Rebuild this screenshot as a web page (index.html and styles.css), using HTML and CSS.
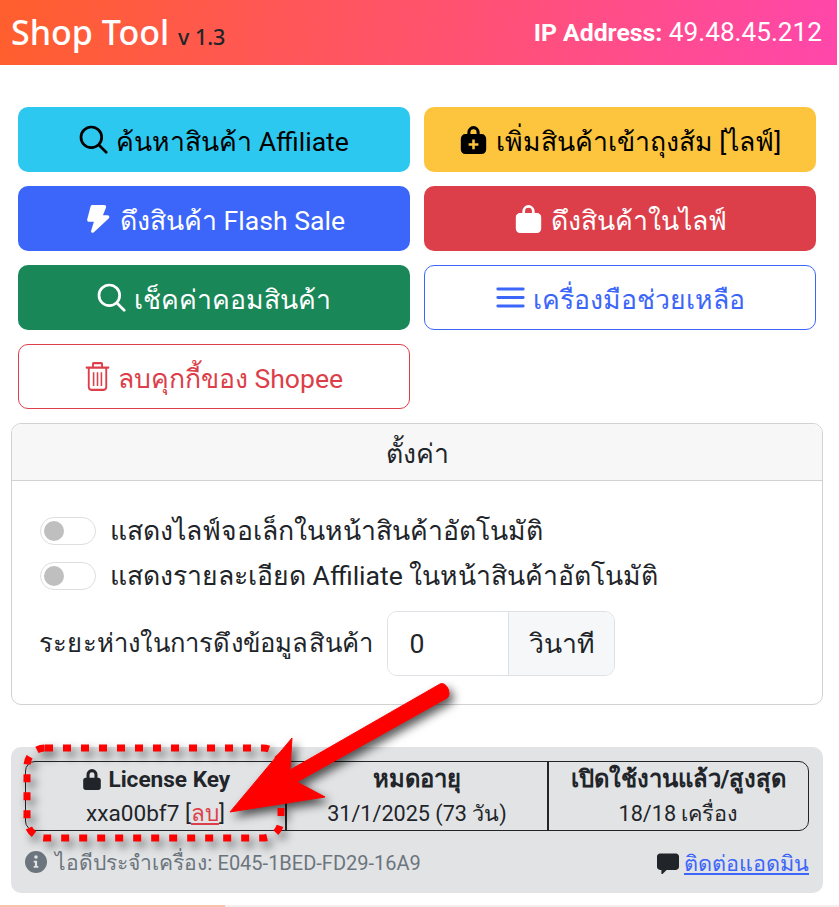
FILE: index.html
```html
<!DOCTYPE html>
<html lang="en">
<head>
    <meta charset="UTF-8">
    <meta name="viewport" content="width=device-width, initial-scale=1.0">
    <title>Shop Tool</title>
    <link rel="stylesheet" href="styles.css">
</head>
<body>
    <header class="topbar">
        <h1 class="brand">Shop Tool <small>v 1.3</small></h1>
        <div class="ip"><strong>IP Address:</strong> 49.48.45.212</div>
    </header>

    <main class="page">
        <!-- Action buttons -->
        <div class="actions">
            <a class="btn btn-info">
                <svg class="icon icon-line" viewBox="0 0 16 16"><circle cx="6.800" cy="6.800" r="5.700"/><path d="M11 11l4 4"/></svg>
                <span>ค้นหาสินค้า Affiliate</span>
            </a>
            <a class="btn btn-warning">
                <svg class="icon" viewBox="0 0 16 16"><path d="M4.600 5V4a3.400 3.400 0 0 1 6.800 0v1h1.100A2.500 2.500 0 0 1 15 7.500v6a2.500 2.500 0 0 1-2.500 2.500h-9A2.500 2.500 0 0 1 1 13.500v-6A2.500 2.500 0 0 1 3.500 5zm1.700 0h3.400V4a1.700 1.700 0 0 0-3.400 0zM7.300 8v2H5.300v1.400h2v2h1.400v-2h2V10h-2V8z"/></svg>
                <span>เพิ่มสินค้าเข้าถุงส้ม [ไลฟ์]</span>
            </a>
            <a class="btn btn-primary">
                <svg class="icon" viewBox="0 0 16 16"><path d="M5.200.6h6.600c.7 0 1.100.7.900 1.300L11 6.200h2.600c.8 0 1.200 1 .7 1.600L6 15.600c-.7.700-1.800 0-1.500-.9L6 9.800H3.300c-.7 0-1.100-.6-1-1.200L4.200 1.400C4.300.9 4.700.6 5.200.6z"/></svg>
                <span>ดึงสินค้า Flash Sale</span>
            </a>
            <a class="btn btn-danger">
                <svg class="icon" viewBox="0 0 16 16"><path d="M4.600 5V4a3.400 3.400 0 0 1 6.800 0v1h1.300A2.300 2.300 0 0 1 15 7.300v6.400a2.300 2.300 0 0 1-2.300 2.300H3.300A2.300 2.300 0 0 1 1 13.700V7.300A2.300 2.300 0 0 1 3.300 5zm1.500 0h3.800V4a1.900 1.900 0 0 0-3.800 0z"/></svg>
                <span>ดึงสินค้าในไลฟ์</span>
            </a>
            <a class="btn btn-success">
                <svg class="icon icon-line" viewBox="0 0 16 16"><circle cx="6.800" cy="6.800" r="5.700"/><path d="M11 11l4 4"/></svg>
                <span>เช็คค่าคอมสินค้า</span>
            </a>
            <a class="btn btn-outline-primary">
                <svg class="icon" viewBox="0 0 16 16"><path d="M1 2.500h14a.8.8 0 0 1 0 1.600H1a.8.8 0 0 1 0-1.600zm0 4.700h14a.8.8 0 0 1 0 1.600H1a.8.8 0 0 1 0-1.600zm0 4.700h14a.8.8 0 0 1 0 1.600H1a.8.8 0 0 1 0-1.600z"/></svg>
                <span>เครื่องมือช่วยเหลือ</span>
            </a>
            <a class="btn btn-outline-danger">
                <svg class="icon icon-trash" viewBox="0 0 16 16" preserveAspectRatio="none"><path d="M5.500 0h5c.6 0 1 .4 1 1v1.500H15a.6.6 0 0 1 0 1.200h-.8v10c0 1.300-.9 2.300-2.200 2.300H4c-1.300 0-2.200-1-2.200-2.300v-10H1a.6.6 0 0 1 0-1.200h3.500V1c0-.6.4-1 1-1zm.2 1.200v1.300h4.600V1.200zM3 3.700v10c0 .7.4 1.100 1 1.100h8c.6 0 1-.4 1-1.100v-10zm2 2h1v7.500H5zm2.500 0h1v7.500h-1zm2.500 0h1v7.500h-1z"/></svg>
                <span>ลบคุกกี้ของ Shopee</span>
            </a>
        </div>

        <!-- Settings -->
        <section class="card">
            <div class="card-header">ตั้งค่า</div>
            <div class="card-body">
                <label class="switch"><span class="switch-track"></span> แสดงไลฟ์จอเล็กในหน้าสินค้าอัตโนมัติ</label>
                <label class="switch"><span class="switch-track"></span> แสดงรายละเอียด Affiliate ในหน้าสินค้าอัตโนมัติ</label>
                <div class="delay-row">
                    <span class="delay-label">ระยะห่างในการดึงข้อมูลสินค้า</span>
                    <div class="input-group">
                        <input class="input-field" type="text" value="0">
                        <span class="input-addon">วินาที</span>
                    </div>
                </div>
            </div>
        </section>

        <!-- License -->
        <section class="license">
            <table class="license-table">
                <tr>
                    <th class="col-key">
                        <svg class="icon-sm" viewBox="0 0 16 16"><path d="M4 7V4.800a4 4 0 0 1 8 0V7h.6c1 0 1.800.8 1.800 1.800v5.400c0 1-.8 1.800-1.800 1.800H3.400c-1 0-1.800-.8-1.800-1.800V8.800C1.600 7.800 2.400 7 3.400 7zm2.200 0h3.600V4.800a1.800 1.800 0 0 0-3.600 0z"/></svg>
                        License Key
                    </th>
                    <th class="col-expire">หมดอายุ</th>
                    <th>เปิดใช้งานแล้ว/สูงสุด</th>
                </tr>
                <tr>
                    <td class="key-value">xxa00bf7 [<a class="link-danger">ลบ</a>]</td>
                    <td>31/1/2025 (73 วัน)</td>
                    <td>18/18 เครื่อง</td>
                </tr>
            </table>
            <div class="license-foot">
                <span class="machine-id">
                    <svg class="icon-sm icon-info" viewBox="0 0 16 16"><path d="M8 0a8 8 0 1 1 0 16A8 8 0 0 1 8 0zm0 3a1.300 1.300 0 1 0 0 2.600A1.300 1.300 0 0 0 8 3zM6.300 7v1.300h.9v2.600h-.9v1.300h3.400v-1.300h-.9V7z"/></svg>
                    ไอดีประจำเครื่อง: <span class="machine-code">E045-1BED-FD29-16A9</span>
                </span>
                <span class="contact">
                    <svg class="icon-sm" viewBox="0 0 16 16"><path d="M2.200 1h11.600C15 1 16 2 16 3.200v7.600c0 1.200-1 2.200-2.200 2.200H7l-3 3c-.3.3-.8.1-.8-.3V13h-1C1 13 0 12 0 10.800V3.200C0 2 1 1 2.200 1z"/></svg>
                    <a class="link-primary">ติดต่อแอดมิน</a>
                </span>
            </div>
        </section>
    </main>
    <div class="bottom-line"></div>

    <!-- Annotation drawn over the screenshot -->
    <svg class="annotation" width="839" height="907" viewBox="0 0 839 907">
        <g class="annotation-ink">
            <rect x="27" y="748" width="254" height="90" rx="18" fill="none" stroke="#ff0000" stroke-width="7" stroke-dasharray="8 10"/>
            <path d="M230 812 L292 738 L290 770 L440 684 C447 681 452 695 447 698 L297 782 L325 797 Z" fill="#ff0000" stroke="#ff0000" stroke-width="1" stroke-linejoin="round"/>
        </g>
    </svg>
</body>
</html>
```

FILE: styles.css
```css
* {
    box-sizing: border-box;
}

body {
    margin: 0;
    font-family: Roboto, "Noto Sans", sans-serif;
    font-size: 26.6px;
    line-height: 1.5;
    color: #212529;
    background-color: #fff;
    overflow: hidden;
    position: relative;
    height: 907px;
}

.topbar {
    display: flex;
    justify-content: space-between;
    align-items: center;
    height: 65px;
    width: 837px;
    padding: 0 15px 0 11px;
    background: linear-gradient(100deg, #ff5f2d, #ff47ab);
    color: white;
}

.brand {
    margin: 0;
    font-family: "Noto Sans", sans-serif;
    font-size: 34px;
    font-weight: 500;
    line-height: 1.2;
}

.brand small {
    font-size: 21.5px;
    color: #212529;
}

.ip {
    font-size: 26.2px;
}

.ip strong {
    font-size: 24.8px;
    font-weight: 700;
}

.page {
    padding: 42px 16px 0 11px;
}

.actions {
    display: grid;
    grid-template-columns: 392px 392px;
    gap: 14px;
    padding: 0 7px;
}

.btn {
    display: flex;
    justify-content: center;
    align-items: center;
    gap: 8px;
    height: 65px;
    border: 1px solid transparent;
    border-radius: 10px;
}

.btn span {
    margin-top: 4px;
}

.btn-info { background-color: #2dc8ef; color: #000; }
.btn-warning { background-color: #fdc53e; color: #000; }
.btn-primary { background-color: #3c66fa; color: white; }
.btn-danger { background-color: #dc3f4a; color: white; }
.btn-success { background-color: #198758; color: white; }
.btn-outline-primary { border-color: #3c66fa; color: #3c66fa; }
.btn-outline-danger { border-color: #dc3f4a; color: #dc3f4a; }

.icon {
    width: 29px;
    height: 29px;
    fill: currentColor;
    flex-shrink: 0;
}

.icon-line {
    fill: none;
    stroke: currentColor;
    stroke-width: 1.500;
    stroke-linecap: round;
}

.icon-trash {
    width: 25px;
}

.icon-sm {
    width: 22px;
    height: 22px;
    fill: currentColor;
    vertical-align: -3px;
}

.icon-info {
    margin-right: 3px;
}

.card {
    margin-top: 14px;
    height: 282px;
    border: 1px solid #d2d2d2;
    border-radius: 10px;
    overflow: hidden;
}

.card-header {
    height: 57px;
    line-height: 60px;
    text-align: center;
    background-color: #f7f7f7;
    border-bottom: 1px solid #d2d2d2;
}

.card-body {
    padding: 27px 28px 0;
}

.switch {
    display: flex;
    align-items: center;
    gap: 14px;
    height: 45px;
}

.switch-track {
    position: relative;
    width: 56px;
    height: 28px;
    border: 1px solid #dedede;
    border-radius: 14px;
}

.switch-track::before {
    content: "";
    position: absolute;
    left: 3px;
    top: 3px;
    width: 20px;
    height: 20px;
    border-radius: 50%;
    background-color: #bfbfbf;
}

.delay-row {
    display: flex;
    align-items: center;
    gap: 14px;
    margin: 13px 0 0 -1px;
}

.delay-label {
    font-size: 25.6px;
    letter-spacing: 0.2px;
}

.input-group {
    display: flex;
    height: 65px;
    width: 228px;
    border: 1px solid #dee2e6;
    border-radius: 10px;
    overflow: hidden;
}

.input-field {
    width: 120px;
    border: none;
    outline: none;
    padding: 0 21px;
    font: inherit;
    color: #212529;
}

.input-addon {
    flex: 1;
    display: flex;
    align-items: center;
    justify-content: center;
    background-color: #f6f7f9;
    border-left: 1px solid #dee2e6;
}

.license {
    margin-top: 42px;
    height: 146px;
    padding: 14px;
    background-color: #e2e3e5;
    border-radius: 10px;
    font-size: 21.6px;
}

.license-table {
    width: 784px;
    height: 70px;
    table-layout: fixed;
    border-collapse: separate;
    border-spacing: 0;
    border: 1px solid #212529;
    border-radius: 10px;
    text-align: center;
}

.license-table th,
.license-table td {
    padding: 0;
    line-height: 33px;
    border-right: 2px solid #212529;
}

.license-table th {
    font-size: 23.8px;
}

.license-table th:last-child,
.license-table td:last-child {
    border-right: none;
}

.license-table .col-key {
    width: 261px;
    font-size: 22.6px;
}

.license-table .col-expire {
    width: 262px;
}

.license-table .key-value {
    font-size: 22.6px;
}

.license-foot {
    display: flex;
    justify-content: space-between;
    align-items: center;
    margin-top: 15px;
    height: 36px;
}

.machine-id {
    font-size: 21px;
    color: #6c757d;
}

.machine-code {
    font-size: 20px;
}

.contact {
    font-size: 21.6px;
}

.link-danger {
    color: #dc3f4a;
    text-decoration: underline;
}

.link-primary {
    color: #3c66fa;
    text-decoration: underline;
}

.bottom-line {
    position: absolute;
    left: 0;
    bottom: 0;
    width: 100%;
    height: 2px;
    background: linear-gradient(90deg, #f6c4ad 0, #f6c4ad 225px, #f3eeeb 225px);
}

.annotation {
    position: absolute;
    left: 0;
    top: 0;
    pointer-events: none;
}

.annotation-ink {
    filter: drop-shadow(4px 5px 5px rgba(0, 0, 0, 0.65));
}
```
